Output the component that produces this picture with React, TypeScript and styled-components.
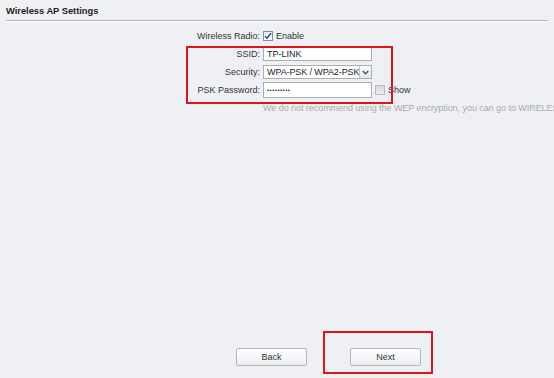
import React from "react";
import styled, { createGlobalStyle } from "styled-components";

const GlobalStyle = createGlobalStyle`
  html, body {
    margin: 0;
    padding: 0;
    background: #eff0f3;
    font-family: "Liberation Sans", Arial, sans-serif;
    font-size: 9px;
    color: #333;
  }
`;

const Page = styled.div`
  position: relative;
  height: 378px;
  width: 554px;
  overflow: hidden;
  display: flex;
  flex-direction: column;
`;

const Header = styled.div`
  margin: 0 6px;
  padding-top: 5px;
  height: 15px;
  border-bottom: 1px solid #b4b6ba;
  box-shadow: 0 1px 0 #ffffff;
  font-weight: bold;
  font-size: 9.3px;
  line-height: 12px;
  color: #222;
`;

const Form = styled.div`
  display: grid;
  grid-template-columns: 260px auto;
  grid-auto-rows: 18px;
  column-gap: 3px;
  margin-top: 6px;
  align-items: center;
`;

const Label = styled.div`
  text-align: right;
  white-space: nowrap;
  color: #333;
`;

const Field = styled.div`
  display: flex;
  align-items: center;
  gap: 3px;
  white-space: nowrap;
`;

const TextInput = styled.input`
  box-sizing: border-box;
  width: 109px;
  height: ${(p) => (p.type === "password" ? 16 : 14)}px;
  margin: 0;
  padding: 0 3px;
  border: 1px solid #a9afb8;
  background: #fff;
  font-family: "Liberation Sans", Arial, sans-serif;
  font-size: ${(p) => (p.type === "password" ? 6 : 9)}px;
  letter-spacing: ${(p) => (p.type === "password" ? "0.5px" : "0")};
  color: #222;
  outline: none;
`;

const SelectBox = styled.div`
  box-sizing: border-box;
  width: 109px;
  height: 14px;
  display: flex;
  align-items: stretch;
  border: 1px solid #a9afb8;
  background: #fff;
`;

const SelectText = styled.span`
  flex: 1;
  padding-left: 3px;
  line-height: 12px;
  letter-spacing: -0.1px;
  color: #222;
`;

const SelectArrow = styled.span`
  width: 11px;
  display: flex;
  align-items: center;
  justify-content: center;
  border-left: 1px solid #c4c8ce;
  background: linear-gradient(#fafbfc, #e4e7eb);
`;

const Check = styled.span<{ $checked?: boolean }>`
  box-sizing: border-box;
  width: 10px;
  height: 10px;
  display: inline-flex;
  align-items: center;
  justify-content: center;
  border: 1px solid ${(p) => (p.$checked ? "#7b8fb0" : "#b9bcc1")};
  background: ${(p) =>
    p.$checked ? "linear-gradient(#e4ebf7, #ffffff)" : "linear-gradient(#d5d7db, #eeeff1)"};
`;

const Note = styled.div`
  grid-column: 2;
  color: #a9abae;
  white-space: nowrap;
  letter-spacing: -0.05px;
`;

const Buttons = styled.div`
  margin-top: auto;
  margin-bottom: 12px;
  margin-left: 236px;
  display: flex;
  gap: 43px;
`;

const Button = styled.button`
  box-sizing: border-box;
  width: 71px;
  height: 18px;
  padding: 0;
  border: 1px solid #b3b7bd;
  border-radius: 2px;
  background: linear-gradient(#ffffff, #eceef1);
  font-family: "Liberation Sans", Arial, sans-serif;
  font-size: 9px;
  color: #333;
`;

const Mark = styled.div<{ $x: number; $y: number; $w: number; $h: number }>`
  position: absolute;
  left: ${(p) => p.$x}px;
  top: ${(p) => p.$y}px;
  width: ${(p) => p.$w}px;
  height: ${(p) => p.$h}px;
  box-sizing: border-box;
  border: 2px solid #e0141e;
  pointer-events: none;
`;

const Tick = () => (
  <svg width="8" height="8" viewBox="0 0 8 8">
    <path d="M1 4.2 L3 6.3 L7 1.2" fill="none" stroke="#2a4a8a" strokeWidth="1.4" />
  </svg>
);

const Chevron = () => (
  <svg width="7" height="5" viewBox="0 0 7 5">
    <path d="M0.8 1 L3.5 3.8 L6.2 1" fill="none" stroke="#4a5566" strokeWidth="1.4" />
  </svg>
);

export default function App() {
  return (
    <Page>
      <GlobalStyle />
      <Header>Wireless AP Settings</Header>
      <Form>
        <Label>Wireless Radio:</Label>
        <Field>
          <Check $checked>
            <Tick />
          </Check>
          Enable
        </Field>

        <Label>SSID:</Label>
        <Field>
          <TextInput type="text" defaultValue="TP-LINK" />
        </Field>

        <Label>Security:</Label>
        <Field>
          <SelectBox>
            <SelectText>WPA-PSK / WPA2-PSK</SelectText>
            <SelectArrow>
              <Chevron />
            </SelectArrow>
          </SelectBox>
        </Field>

        <Label>PSK Password:</Label>
        <Field>
          <TextInput type="password" defaultValue="123456789" />
          <Check />
          Show
        </Field>

        <Note>We do not recommend using the WEP encryption, you can go to WIRELESS ADVANCED</Note>
      </Form>
      <Buttons>
        <Button>Back</Button>
        <Button>Next</Button>
      </Buttons>
      <Mark $x={186} $y={46} $w={207} $h={58} />
      <Mark $x={323} $y={331} $w={110} $h={43} />
    </Page>
  );
}
